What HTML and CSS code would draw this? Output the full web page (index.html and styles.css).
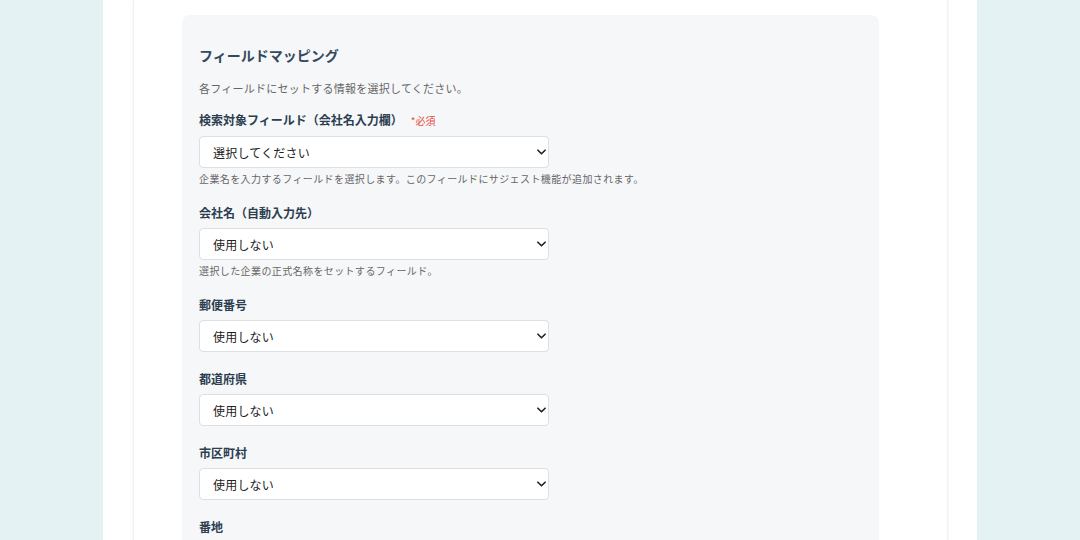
FILE: index.html
```html
<!DOCTYPE html>
<html lang="ja">
<head>
<meta charset="utf-8">
<link rel="stylesheet" href="styles.css">
</head>
<body>
<div class="page">
  <div class="card">
    <section class="panel">
      <h3 class="panel-title">フィールドマッピング</h3>
      <p class="panel-desc">各フィールドにセットする情報を選択してください。</p>

      <div class="field">
        <label class="field-label">検索対象フィールド（会社名入力欄）<span class="req">*必須</span></label>
        <div class="select-wrap">
          <select class="select"><option>選択してください</option></select>
          <svg class="chev" viewBox="0 0 10 6" width="9" height="6"><path d="M1 1l4 4 4-4" fill="none" stroke="#222" stroke-width="1.8" stroke-linecap="round" stroke-linejoin="round"/></svg>
        </div>
        <p class="help">企業名を入力するフィールドを選択します。このフィールドにサジェスト機能が追加されます。</p>
      </div>

      <div class="field">
        <label class="field-label">会社名（自動入力先）</label>
        <div class="select-wrap">
          <select class="select"><option>使用しない</option></select>
          <svg class="chev" viewBox="0 0 10 6" width="9" height="6"><path d="M1 1l4 4 4-4" fill="none" stroke="#222" stroke-width="1.8" stroke-linecap="round" stroke-linejoin="round"/></svg>
        </div>
        <p class="help">選択した企業の正式名称をセットするフィールド。</p>
      </div>

      <div class="field">
        <label class="field-label">郵便番号</label>
        <div class="select-wrap">
          <select class="select"><option>使用しない</option></select>
          <svg class="chev" viewBox="0 0 10 6" width="9" height="6"><path d="M1 1l4 4 4-4" fill="none" stroke="#222" stroke-width="1.8" stroke-linecap="round" stroke-linejoin="round"/></svg>
        </div>
      </div>

      <div class="field">
        <label class="field-label">都道府県</label>
        <div class="select-wrap">
          <select class="select"><option>使用しない</option></select>
          <svg class="chev" viewBox="0 0 10 6" width="9" height="6"><path d="M1 1l4 4 4-4" fill="none" stroke="#222" stroke-width="1.8" stroke-linecap="round" stroke-linejoin="round"/></svg>
        </div>
      </div>

      <div class="field">
        <label class="field-label">市区町村</label>
        <div class="select-wrap">
          <select class="select"><option>使用しない</option></select>
          <svg class="chev" viewBox="0 0 10 6" width="9" height="6"><path d="M1 1l4 4 4-4" fill="none" stroke="#222" stroke-width="1.8" stroke-linecap="round" stroke-linejoin="round"/></svg>
        </div>
      </div>

      <div class="field">
        <label class="field-label">番地</label>
        <div class="select-wrap">
          <select class="select"><option>使用しない</option></select>
          <svg class="chev" viewBox="0 0 10 6" width="9" height="6"><path d="M1 1l4 4 4-4" fill="none" stroke="#222" stroke-width="1.8" stroke-linecap="round" stroke-linejoin="round"/></svg>
        </div>
      </div>
    </section>
  </div>
</div>
</body>
</html>
```

FILE: styles.css
```css
* { box-sizing: border-box; }
html, body { margin: 0; padding: 0; }
body {
  background: #e5f2f3;
  font-family: "Noto Sans CJK JP", "Noto Sans", sans-serif;
  color: #333;
}
.page {
  width: 874px;
  margin: 0 auto;
  background: #ffffff;
  min-height: 540px;
  padding: 0 30px 0 31px;
  overflow: hidden;
}
.card {
  background: #fff;
  box-shadow: 0 0 3px rgba(0,0,0,0.14);
  padding: 15px 68px 0 48px;
  min-height: 600px;
}
.panel {
  background: #f6f7f9;
  border-radius: 8px;
  padding: 30px 17px 40px;
}
.panel-title {
  margin: 0 0 15px;
  font-size: 14px;
  line-height: 20px;
  font-weight: 700;
  color: #34495e;
}
.panel-desc {
  margin: 0 0 15px;
  font-size: 11px;
  line-height: 16px;
  letter-spacing: 0.25px;
  color: #666;
}
.field {
  margin-bottom: 18px;
}
.field-label {
  display: block;
  font-size: 12px;
  line-height: 18px;
  font-weight: 700;
  color: #2c3e50;
  margin-bottom: 6px;
}
.req {
  color: #e74c3c;
  font-size: 10px;
  font-weight: 400;
  margin-left: 8px;
}
.select-wrap {
  position: relative;
  width: 350px;
}
.select {
  appearance: none;
  -webkit-appearance: none;
  display: block;
  width: 100%;
  height: 32px;
  padding: 0 28px 0 13px;
  border: 1px solid #dcdfe4;
  border-radius: 4px;
  background: #fff;
  font-family: "Noto Sans CJK JP", "Noto Sans", sans-serif;
  font-size: 12px;
  font-weight: 400;
  letter-spacing: 0.2px;
  color: #222;
}
.chev {
  position: absolute;
  right: 3px;
  top: 13px;
  pointer-events: none;
}
.help {
  margin: 4px 0 0;
  font-size: 10px;
  line-height: 14px;
  letter-spacing: 0.4px;
  color: #666;
}
```
